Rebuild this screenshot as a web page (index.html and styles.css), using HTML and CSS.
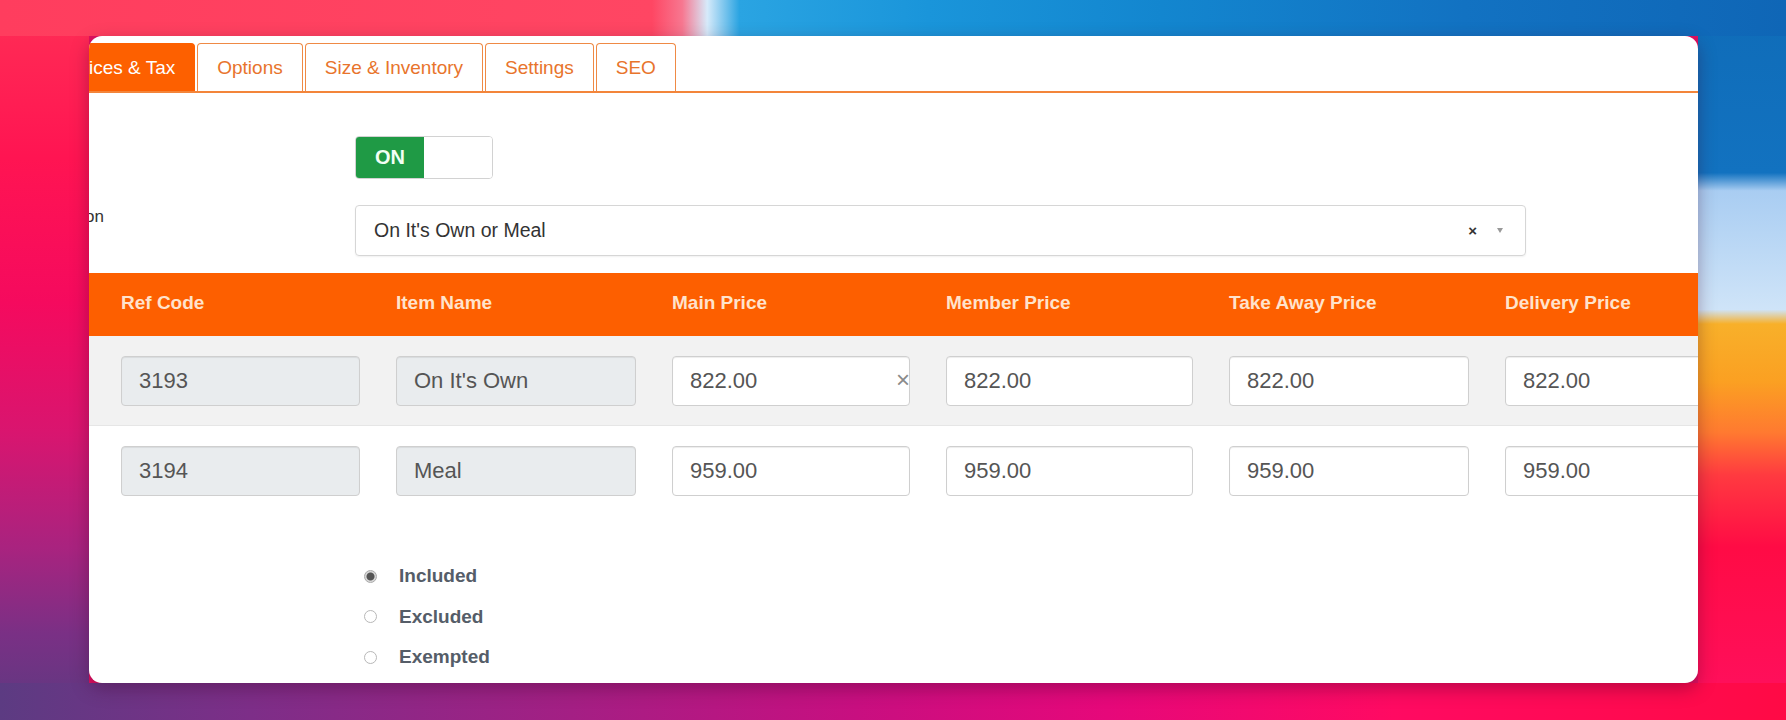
FILE: index.html
```html
<!DOCTYPE html>
<html lang="en">
<head>
  <meta charset="UTF-8">
  <meta name="viewport" content="width=device-width, initial-scale=1.0">
  <title>Edit Item - Prices &amp; Tax</title>
  <link rel="stylesheet" href="styles.css">
</head>
<body>
  <div class="desktop">
    <div class="window">
      <div class="page">
        <ul class="tabs">
          <li class="tab active">Prices &amp; Tax</li>
          <li class="tab">Options</li>
          <li class="tab">Size &amp; Inventory</li>
          <li class="tab">Settings</li>
          <li class="tab">SEO</li>
        </ul>

        <div class="form-row row-toggle">
          <div class="label"></div>
          <div class="control">
            <div class="switch">
              <span class="switch-on">ON</span>
              <span class="switch-off"></span>
            </div>
          </div>
        </div>

        <div class="form-row row-select">
          <div class="label"><span>Variation</span></div>
          <div class="control">
            <div class="select">
              <span class="select-text">On It's Own or Meal</span>
              <span class="select-clear">&times;</span>
              <span class="select-arrow"></span>
            </div>
          </div>
        </div>

        <div class="price-table">
          <div class="pt-head">
            <div>Ref Code</div>
            <div>Item Name</div>
            <div>Main Price</div>
            <div>Member Price</div>
            <div>Take Away Price</div>
            <div>Delivery Price</div>
          </div>
          <div class="pt-row shaded">
            <div class="field"><input class="input readonly" value="3193" readonly></div>
            <div class="field"><input class="input readonly" value="On It's Own" readonly></div>
            <div class="field"><input class="input" value="822.00"><span class="input-clear">&times;</span></div>
            <div class="field"><input class="input" value="822.00"></div>
            <div class="field"><input class="input" value="822.00"></div>
            <div class="field"><input class="input" value="822.00"></div>
          </div>
          <div class="pt-row">
            <div class="field"><input class="input readonly" value="3194" readonly></div>
            <div class="field"><input class="input readonly" value="Meal" readonly></div>
            <div class="field"><input class="input" value="959.00"></div>
            <div class="field"><input class="input" value="959.00"></div>
            <div class="field"><input class="input" value="959.00"></div>
            <div class="field"><input class="input" value="959.00"></div>
          </div>
        </div>

        <div class="form-row row-tax">
          <div class="label"></div>
          <div class="control radios">
            <label class="radio"><span class="radio-dot checked"></span>Included</label>
            <label class="radio"><span class="radio-dot"></span>Excluded</label>
            <label class="radio"><span class="radio-dot"></span>Exempted</label>
          </div>
        </div>
      </div>
    </div>
  </div>
</body>
</html>
```

FILE: styles.css
```css
body {
  margin: 0;
  font-family: "Liberation Sans", Arial, sans-serif;
  color: #333;
}

/* wallpaper behind the window */
.desktop {
  height: 720px;
  box-sizing: border-box;
  padding: 36px 0 0 89px;
  overflow: hidden;
  background:
    linear-gradient(to right, #ff3d5e 0%, #ff4663 36.5%, #f77790 38.2%, #d6eafa 39.6%, #2aa4e2 41.4%, #1a95da 52%, #1386cf 65%, #1272c2 82%, #0f66b6 100%) 0 0 / 100% 36px no-repeat,
    linear-gradient(to right, #5c3b82 0%, #7d2e88 14%, #a41f84 32%, #c80f80 48%, #e6087a 62%, #ff0a62 78%, #ff0a45 100%) 0 100% / 100% 37px no-repeat,
    linear-gradient(to bottom, #ff2f55 0%, #ff1452 22%, #f50a5e 42%, #d9156f 60%, #a9237f 76%, #7a3085 88%, #5c3a80 100%) 0 0 / 89px 100% no-repeat,
    linear-gradient(to bottom, #0f6cb8 0%, #1272c0 24%, #a9cdf2 26.5%, #cfe4f8 43%, #f8b02a 45%, #fba022 53%, #ff7a30 60%, #ff3a40 66%, #ff0b45 76%, #ff1060 100%) 100% 0 / 88px 100% no-repeat,
    #e01060;
}

.window {
  width: 1609px;
  height: 647px;
  background: #fff;
  border-radius: 13px;
  overflow: hidden;
  box-shadow: 0 6px 18px rgba(60, 0, 40, 0.35);
}

/* the screenshot inside is cropped on the left */
.page {
  margin-left: -39px;
  padding-top: 7px;
}

/* tabs */
.tabs {
  display: flex;
  gap: 2px;
  margin: 0;
  padding: 0;
  list-style: none;
  border-bottom: 2px solid #f3853a;
}
.tab {
  height: 47px;
  line-height: 47px;
  padding: 0 19px;
  border: 1px solid #ef8a45;
  border-bottom: none;
  border-radius: 4px 4px 0 0;
  background: #fff;
  color: #e8742c;
  font-size: 19px;
  white-space: nowrap;
}
.tab.active {
  background: #fd6000;
  border-color: #fd6000;
  color: #fff;
}

/* form rows */
.form-row {
  display: flex;
}
.label {
  flex: none;
  width: 305px;
  box-sizing: border-box;
  padding-right: 251px;
  display: flex;
  justify-content: flex-end;
  font-size: 17px;
  line-height: 24px;
  color: #333;
  white-space: nowrap;
}
.row-toggle {
  margin-top: 43px;
}
.row-select {
  margin-top: 26px;
}

.switch {
  width: 138px;
  height: 43px;
  box-sizing: border-box;
  border: 1px solid #d2d2d2;
  border-radius: 4px;
  overflow: hidden;
  display: flex;
}
.switch-on {
  width: 68px;
  background: #1f9a45;
  color: #f2fff4;
  font-weight: bold;
  font-size: 20px;
  display: flex;
  align-items: center;
  justify-content: center;
}
.switch-off {
  flex: 1;
  background: #fff;
}

.select {
  width: 1171px;
  height: 51px;
  box-sizing: border-box;
  border: 1px solid #d6d6d6;
  border-radius: 4px;
  box-shadow: 0 1px 2px rgba(0, 0, 0, 0.06);
  display: flex;
  align-items: center;
  padding: 0 22px 0 18px;
  font-size: 19.5px;
  color: #333;
}
.select-clear {
  margin-left: auto;
  font-weight: bold;
  font-size: 15px;
  color: #333;
}
.select-arrow {
  margin-left: 20px;
  border-top: 5px solid #999;
  border-left: 3.5px solid transparent;
  border-right: 3.5px solid transparent;
}

/* price table */
.price-table {
  margin-top: 17px;
}
.pt-head,
.pt-row {
  display: grid;
  grid-template-columns: 275px 276px 274px 283px 276px 276px;
  padding-left: 71px;
}
.pt-head {
  height: 63px;
  box-sizing: border-box;
  padding-bottom: 4px;
  align-items: center;
  background: #fd5f00;
  color: #ffe3cc;
  font-weight: bold;
  font-size: 19px;
}
.pt-row {
  padding-top: 20px;
  padding-bottom: 19px;
}
.pt-row.shaded {
  background: #f2f2f2;
}
.pt-row + .pt-row {
  border-top: 1px solid #e6e6e6;
}
.field {
  position: relative;
  width: calc(100% - 36px);
}
.input {
  width: 100%;
  height: 50px;
  box-sizing: border-box;
  margin: 0;
  border: 1px solid #cfcfcf;
  border-radius: 4px;
  padding: 0 17px;
  background: #fff;
  box-shadow: inset 0 1px 1px rgba(0, 0, 0, 0.075);
  font-family: inherit;
  font-size: 22px;
  color: #555;
}
.input.readonly {
  background: #e9ecee;
}
.input-clear {
  position: absolute;
  right: 0;
  top: 50%;
  transform: translateY(-52%);
  font-size: 24px;
  color: #8a8a8a;
}

/* tax radios */
.row-tax {
  margin-top: 41px;
}
.radios {
  padding-left: 9px;
}
.radio {
  display: flex;
  align-items: center;
  gap: 22px;
  height: 40.5px;
  font-weight: bold;
  font-size: 19px;
  color: #555d68;
}
.radio-dot {
  width: 13px;
  height: 13px;
  box-sizing: border-box;
  border: 1px solid #b8b8b8;
  border-radius: 50%;
  background: #fff;
}
.radio-dot.checked {
  border-color: #aaa;
  background: radial-gradient(circle, #555 0 3.5px, #d8d8d8 4.5px);
}
```
